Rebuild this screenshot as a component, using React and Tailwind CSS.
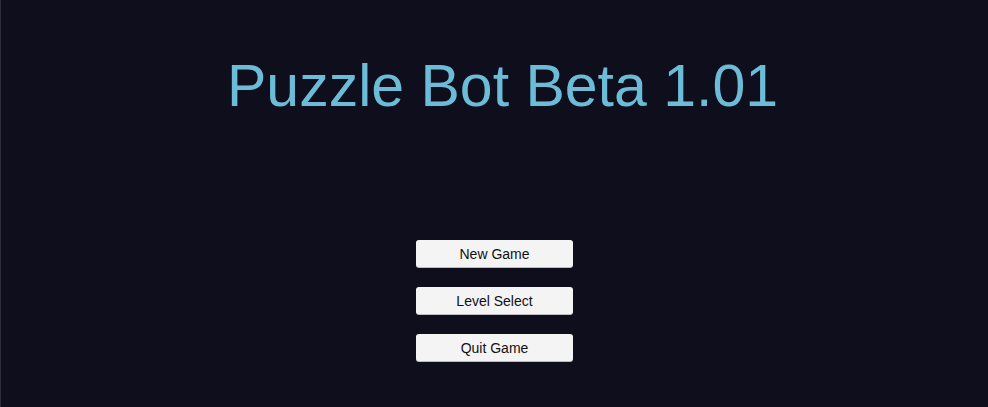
export default function App() {
  const buttons = ["New Game", "Level Select", "Quit Game"];
  return (
    <div className="w-[988px] h-[407px] bg-[#0e0e1d] border-l border-[#2b2b3b] flex flex-col items-center overflow-hidden" style={{ fontFamily: '"Liberation Sans", Arial, sans-serif' }}>
      <h1 className="mt-[56px] pl-[16px] h-[60px] leading-[60px] text-[59px] text-[#6cbcd8] whitespace-nowrap">
        Puzzle Bot Beta 1.01
      </h1>
      <div className="mt-[124px] flex flex-col gap-[20px]">
        {buttons.map((b) => (
          <button key={b} className="w-[157px] h-[27px] rounded-[3px] bg-[#f4f4f4] text-[14px] text-[#111] leading-none flex items-center justify-center shadow-[0_1px_0_#bdbdbd]">
            {b}
          </button>
        ))}
      </div>
    </div>
  );
}
